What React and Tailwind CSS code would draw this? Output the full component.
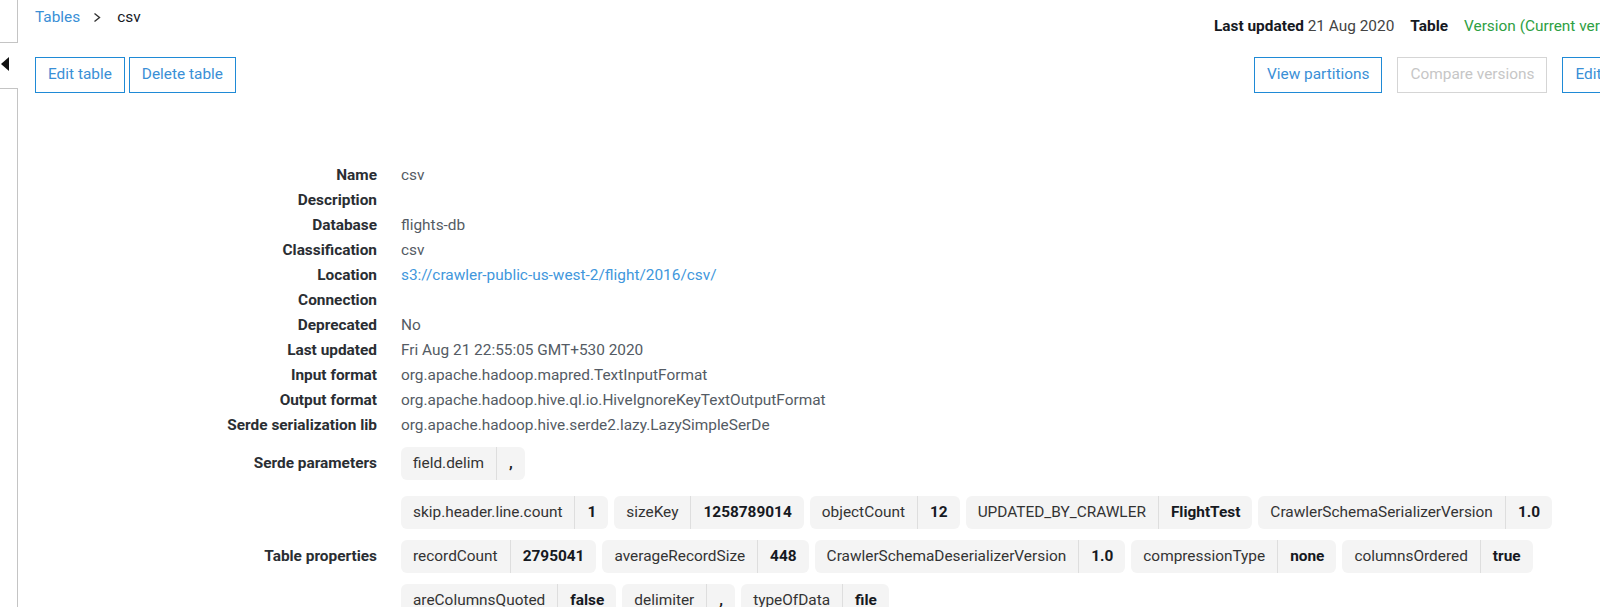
import React from "react";

const details = [
  ["Name", "csv"],
  ["Description", ""],
  ["Database", "flights-db"],
  ["Classification", "csv"],
  ["Location", "s3://crawler-public-us-west-2/flight/2016/csv/", true],
  ["Connection", ""],
  ["Deprecated", "No"],
  ["Last updated", "Fri Aug 21 22:55:05 GMT+530 2020"],
  ["Input format", "org.apache.hadoop.mapred.TextInputFormat"],
  ["Output format", "org.apache.hadoop.hive.ql.io.HiveIgnoreKeyTextOutputFormat"],
  ["Serde serialization lib", "org.apache.hadoop.hive.serde2.lazy.LazySimpleSerDe"],
];

const propRows = [
  [
    ["skip.header.line.count", "1"],
    ["sizeKey", "1258789014"],
    ["objectCount", "12"],
    ["UPDATED_BY_CRAWLER", "FlightTest"],
    ["CrawlerSchemaSerializerVersion", "1.0"],
  ],
  [
    ["recordCount", "2795041"],
    ["averageRecordSize", "448"],
    ["CrawlerSchemaDeserializerVersion", "1.0"],
    ["compressionType", "none"],
    ["columnsOrdered", "true"],
  ],
  [
    ["areColumnsQuoted", "false"],
    ["delimiter", ","],
    ["typeOfData", "file"],
  ],
];

function Chip({ k, v }) {
  return (
    <div className="flex h-[33px] shrink-0 items-stretch rounded-md bg-[#f4f4f4] whitespace-nowrap">
      <span className="flex items-center px-3 text-[#333]">{k}</span>
      <span className="w-px bg-[#dedede]" />
      <span className="flex items-center px-3 font-bold text-[#16191f]">{v}</span>
    </div>
  );
}

function Btn({ children, disabled }) {
  return (
    <button
      className={
        disabled
          ? "h-[36px] shrink-0 whitespace-nowrap border border-[#d5d5d5] bg-white px-3 text-[#c6c6c6]"
          : "h-[36px] shrink-0 whitespace-nowrap border border-[#1f8ad6] bg-white px-3 text-[#3a8fd6]"
      }
    >
      {children}
    </button>
  );
}

export default function App() {
  return (
    <div className="flex h-[607px] w-[1600px] overflow-hidden bg-white font-['Roboto','Liberation_Sans',sans-serif] text-[15.4px]">
      {/* collapsed side nav */}
      <div className="flex w-[18px] shrink-0 flex-col">
        <div className="h-[43px] border-r border-b border-[#c4c4c4]" />
        <div className="h-[45px] pt-[14px] pl-[1px]">
          <svg width="8" height="14" viewBox="0 0 8 14">
            <polygon points="8,0 8,14 0,7" fill="#111" />
          </svg>
        </div>
        <div className="flex-1 border-t border-r border-[#c4c4c4]" />
      </div>

      <div className="min-w-0 flex-1 pl-[17px]">
        {/* header */}
        <div className="flex h-[57px] items-start">
          <div className="flex w-[1179px] shrink-0 items-center pt-[7px] leading-[20px]">
            <span className="text-[#3a8fd6]">Tables</span>
            <svg className="ml-[13px] mr-[16px]" width="8" height="11" viewBox="0 0 8 11">
              <polyline points="1.5,1.5 6.5,5.5 1.5,9.5" fill="none" stroke="#333" strokeWidth="1.4" />
            </svg>
            <span className="text-[#16191f]">csv</span>
          </div>
          <div className="flex shrink-0 gap-4 whitespace-nowrap pt-[16px] leading-[20px]">
            <span>
              <b className="text-[#16191f]">Last updated</b>{" "}
              <span className="text-[#444]">21 Aug 2020</span>
            </span>
            <b className="text-[#16191f]">Table</b>
            <span className="text-[#2ea043]">Version (Current version)</span>
          </div>
        </div>

        <div className="flex">
          <div className="flex w-[1219px] shrink-0 gap-1">
            <Btn>Edit table</Btn>
            <Btn>Delete table</Btn>
          </div>
          <div className="flex shrink-0 gap-[15px]">
            <Btn>View partitions</Btn>
            <Btn disabled>Compare versions</Btn>
            <Btn>Edit schema</Btn>
          </div>
        </div>

        {/* details */}
        <div className="mt-[70px] grid grid-cols-[342px_1fr] gap-x-6 leading-[25px]">
          {details.map(([label, value, link]) => (
            <React.Fragment key={label}>
              <div className="whitespace-nowrap text-right font-bold text-[#2a2e33]">{label}</div>
              <div className={link ? "whitespace-nowrap text-[#4197dc]" : "whitespace-nowrap text-[#545b64]"}>
                {value}
              </div>
            </React.Fragment>
          ))}
        </div>

        <div className="mt-[9px] flex items-center gap-6">
          <div className="w-[342px] shrink-0 text-right font-bold text-[#2a2e33]">Serde parameters</div>
          <Chip k="field.delim" v="," />
        </div>

        <div className="mt-[16px] flex items-center gap-6">
          <div className="w-[342px] shrink-0 text-right font-bold text-[#2a2e33]">Table properties</div>
          <div className="flex flex-col gap-[11px]">
            {propRows.map((row, i) => (
              <div key={i} className="flex gap-[6px]">
                {row.map(([k, v]) => (
                  <Chip key={k} k={k} v={v} />
                ))}
              </div>
            ))}
          </div>
        </div>
      </div>
    </div>
  );
}
